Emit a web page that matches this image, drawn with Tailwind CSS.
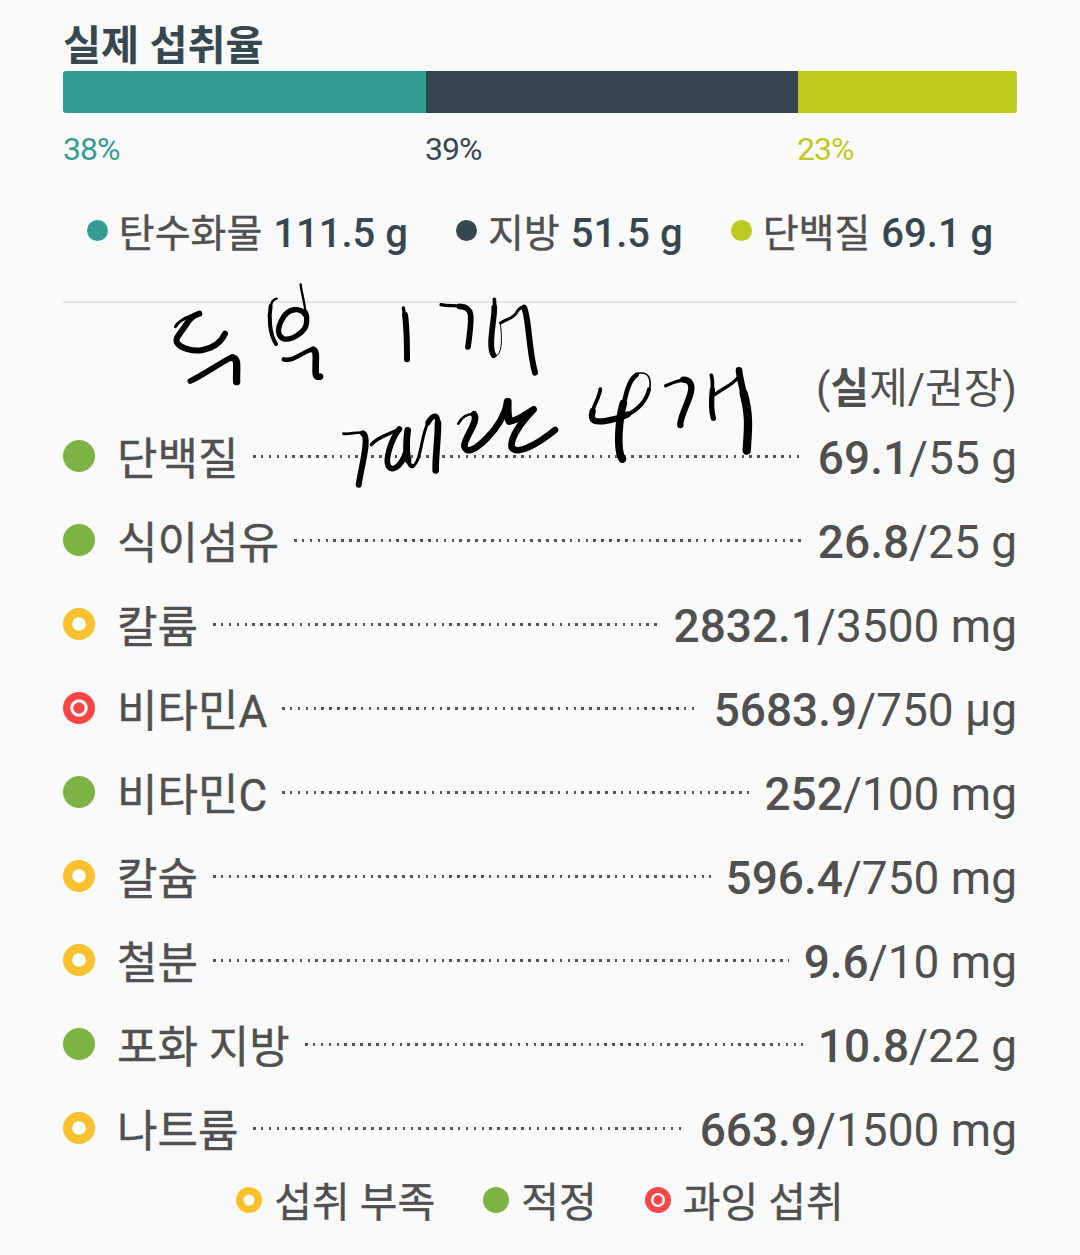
<!DOCTYPE html>
<html lang="ko">
<head>
  <meta charset="UTF-8">
  <meta name="viewport" content="width=device-width, initial-scale=1.0">
  <title>실제 섭취율</title>
  <script src="https://cdn.jsdelivr.net/npm/@tailwindcss/browser@4"></script>
</head>
<body class="relative h-[1255px] overflow-hidden bg-[#fafafa] px-[63px] font-['Roboto','Noto_Sans_CJK_KR',sans-serif] text-[#505050]">
  <svg class="hidden">
    <symbol id="good" viewBox="0 0 32 32"><circle cx="16" cy="16" r="16" fill="#7cb342"/></symbol>
    <symbol id="low" viewBox="0 0 32 32"><circle cx="16" cy="16" r="16" fill="#fbc02d"/><circle cx="16" cy="16" r="6.8" fill="#fff"/></symbol>
    <symbol id="over" viewBox="0 0 32 32"><circle cx="16" cy="16" r="16" fill="#f94545"/><circle cx="16" cy="16" r="7.2" fill="none" stroke="#fff" stroke-width="3"/></symbol>
  </svg>

  <header class="h-[71px] pt-[16px]">
    <h1 class="text-[41.4px] leading-[60px] font-bold text-[#37474f]">실제 섭취율</h1>
  </header>

  <section>
    <div class="flex h-[42px] overflow-hidden rounded-[3px]">
      <div class="w-[363px] bg-[#359c94]"></div>
      <div class="w-[372px] bg-[#37474f]"></div>
      <div class="flex-1 bg-[#bdca1f]"></div>
    </div>
    <div class="flex h-[72px] pt-[16px] text-[32px] leading-[40px] tracking-[-1px]">
      <div class="w-[362px] text-[#359c94]">38%</div>
      <div class="w-[372px] text-[#37474f]">39%</div>
      <div class="text-[#bdca1f]">23%</div>
    </div>
    <div class="flex h-[118px] items-start justify-center gap-[48px] border-b-2 border-[#e4e4e4] pt-[21px] text-[39px] leading-[56px]">
      <div class="flex items-center">
        <span class="mr-[11px] mb-[8px] size-[21px] rounded-full bg-[#359c94]"></span>
        <span class="[-webkit-text-stroke:0.4px]">탄수화물</span>
        <span class="ml-[11px] text-[40px] font-medium text-[#37474f]">111.5 g</span>
      </div>
      <div class="flex items-center">
        <span class="mr-[11px] mb-[8px] size-[21px] rounded-full bg-[#37474f]"></span>
        <span class="[-webkit-text-stroke:0.4px]">지방</span>
        <span class="ml-[11px] text-[40px] font-medium text-[#37474f]">51.5 g</span>
      </div>
      <div class="flex items-center">
        <span class="mr-[11px] mb-[8px] size-[21px] rounded-full bg-[#bdca1f]"></span>
        <span class="[-webkit-text-stroke:0.4px]">단백질</span>
        <span class="ml-[11px] text-[40px] font-medium text-[#37474f]">69.1 g</span>
      </div>
    </div>
  </section>

  <section class="text-[46px]">
    <div class="h-[111px] pt-[56px] text-right text-[42px] leading-[60px]">(<b class="font-bold">실</b>제/권장)</div>

    <div class="flex h-[84px] items-center">
      <svg class="size-8"><use href="#good"/></svg>
      <span class="ml-[22px] pt-[8px] text-[44px] [-webkit-text-stroke:0.4px]">단백질</span>
      <span class="mx-[15px] h-[3px] flex-1 bg-[repeating-linear-gradient(90deg,#555_0_2.6px,transparent_2.6px_7.88px)]"></span>
      <span class="pt-[5px]"><b class="font-medium">69.1</b>/55 g</span>
    </div>
    <div class="flex h-[84px] items-center">
      <svg class="size-8"><use href="#good"/></svg>
      <span class="ml-[22px] pt-[8px] text-[44px] [-webkit-text-stroke:0.4px]">식이섬유</span>
      <span class="mx-[15px] h-[3px] flex-1 bg-[repeating-linear-gradient(90deg,#555_0_2.6px,transparent_2.6px_7.88px)]"></span>
      <span class="pt-[5px]"><b class="font-medium">26.8</b>/25 g</span>
    </div>
    <div class="flex h-[84px] items-center">
      <svg class="size-8"><use href="#low"/></svg>
      <span class="ml-[22px] pt-[8px] text-[44px] [-webkit-text-stroke:0.4px]">칼륨</span>
      <span class="mx-[15px] h-[3px] flex-1 bg-[repeating-linear-gradient(90deg,#555_0_2.6px,transparent_2.6px_7.88px)]"></span>
      <span class="pt-[5px]"><b class="font-medium">2832.1</b>/3500 mg</span>
    </div>
    <div class="flex h-[84px] items-center">
      <svg class="size-8"><use href="#over"/></svg>
      <span class="ml-[22px] pt-[8px] text-[44px] [-webkit-text-stroke:0.4px]">비타민A</span>
      <span class="mx-[15px] h-[3px] flex-1 bg-[repeating-linear-gradient(90deg,#555_0_2.6px,transparent_2.6px_7.88px)]"></span>
      <span class="pt-[5px]"><b class="font-medium">5683.9</b>/750 μg</span>
    </div>
    <div class="flex h-[84px] items-center">
      <svg class="size-8"><use href="#good"/></svg>
      <span class="ml-[22px] pt-[8px] text-[44px] [-webkit-text-stroke:0.4px]">비타민C</span>
      <span class="mx-[15px] h-[3px] flex-1 bg-[repeating-linear-gradient(90deg,#555_0_2.6px,transparent_2.6px_7.88px)]"></span>
      <span class="pt-[5px]"><b class="font-medium">252</b>/100 mg</span>
    </div>
    <div class="flex h-[84px] items-center">
      <svg class="size-8"><use href="#low"/></svg>
      <span class="ml-[22px] pt-[8px] text-[44px] [-webkit-text-stroke:0.4px]">칼슘</span>
      <span class="mx-[15px] h-[3px] flex-1 bg-[repeating-linear-gradient(90deg,#555_0_2.6px,transparent_2.6px_7.88px)]"></span>
      <span class="pt-[5px]"><b class="font-medium">596.4</b>/750 mg</span>
    </div>
    <div class="flex h-[84px] items-center">
      <svg class="size-8"><use href="#low"/></svg>
      <span class="ml-[22px] pt-[8px] text-[44px] [-webkit-text-stroke:0.4px]">철분</span>
      <span class="mx-[15px] h-[3px] flex-1 bg-[repeating-linear-gradient(90deg,#555_0_2.6px,transparent_2.6px_7.88px)]"></span>
      <span class="pt-[5px]"><b class="font-medium">9.6</b>/10 mg</span>
    </div>
    <div class="flex h-[84px] items-center">
      <svg class="size-8"><use href="#good"/></svg>
      <span class="ml-[22px] pt-[8px] text-[44px] [-webkit-text-stroke:0.4px]">포화 지방</span>
      <span class="mx-[15px] h-[3px] flex-1 bg-[repeating-linear-gradient(90deg,#555_0_2.6px,transparent_2.6px_7.88px)]"></span>
      <span class="pt-[5px]"><b class="font-medium">10.8</b>/22 g</span>
    </div>
    <div class="flex h-[84px] items-center">
      <svg class="size-8"><use href="#low"/></svg>
      <span class="ml-[22px] pt-[8px] text-[44px] [-webkit-text-stroke:0.4px]">나트륨</span>
      <span class="mx-[15px] h-[3px] flex-1 bg-[repeating-linear-gradient(90deg,#555_0_2.6px,transparent_2.6px_7.88px)]"></span>
      <span class="pt-[5px]"><b class="font-medium">663.9</b>/1500 mg</span>
    </div>
  </section>

  <footer class="flex h-[60px] items-center justify-center gap-[48px] text-[41px] leading-[60px] [-webkit-text-stroke:0.4px]">
    <div class="flex items-center"><svg class="mr-[12px] size-[26px]"><use href="#low"/></svg><span class="pt-[6px]">섭취 부족</span></div>
    <div class="flex items-center"><svg class="mr-[12px] size-[26px]"><use href="#good"/></svg><span class="pt-[6px]">적정</span></div>
    <div class="flex items-center"><svg class="mr-[12px] size-[26px]"><use href="#over"/></svg><span class="pt-[6px]">과잉 섭취</span></div>
  </footer>

  <!-- handwritten pen memo over the list -->
  <svg class="absolute top-[280px] left-[160px] h-[220px] w-[620px]" viewBox="0 0 1860 660" fill="none" stroke="#000" stroke-linecap="round" stroke-linejoin="round">
    <g>
      <path stroke-width="9" d="M46 140C58 120 80 112 96 106"/>
      <path stroke-width="18" d="M118 101C92 108 84 126 70 146C54 168 46 176 50 186C60 205 100 216 128 210C160 203 184 185 195 161"/>
      <path stroke-width="17" d="M91 303C130 285 170 255 216 231"/>
      <path stroke-width="22" d="M220 234C236 238 228 270 230 305"/>
      <path stroke-width="7" d="M350 56C338 58 333 70 331 84"/>
      <path stroke-width="12" d="M332 78C326 110 328 160 348 192"/>
      <path stroke-width="16" d="M436 104C420 80 385 85 368 115C350 145 352 170 372 177C400 182 438 150 439 132C441 118 440 105 436 98"/>
      <path stroke-width="7" d="M422 13C424 40 434 60 437 104"/>
      <path stroke-width="13" d="M371 238C400 246 430 215 458 207"/>
      <path stroke-width="20" d="M460 209C472 215 466 240 467 265C466 285 468 292 480 290"/>
    </g>
    <g transform="translate(630 0)">
      <path stroke-width="10" d="M100 84L105 112"/>
      <path stroke-width="18" d="M105 104C110 140 111 190 111 238"/>
      <path stroke-width="10" d="M213 74C235 80 255 74 272 80"/>
      <path stroke-width="17" d="M268 79C312 80 306 110 294 201"/>
      <path stroke-width="11" d="M373 58C376 80 374 90 372 105"/>
      <path stroke-width="17" d="M373 82C374 120 352 200 371 226"/>
      <path stroke-width="3" d="M374 230C402 225 394 160 391 130"/>
      <path stroke-width="9" d="M392 129C410 116 430 118 442 94C450 82 458 80 464 81"/>
      <path stroke-width="18" d="M462 83C476 105 476 210 495 278"/>
    </g>
    <g transform="translate(510 300)">
      <path stroke-width="8" d="M40 161C60 164 80 155 100 158"/>
      <path stroke-width="18" d="M99 160C120 172 96 250 86 314"/>
      <path stroke-width="10" d="M124 194C145 168 180 164 208 146"/>
      <path stroke-width="17" d="M208 147C182 180 165 240 175 258C190 282 222 250 232 200"/>
      <path stroke-width="20" d="M233 151C229 180 228 215 234 240"/>
      <path stroke-width="13" d="M234 240C238 254 242 260 248 258"/>
      <path stroke-width="9" d="M248 259C275 245 272 165 296 124"/>
      <path stroke-width="16" d="M294 128C310 100 326 100 324 140"/>
      <path stroke-width="20" d="M324 130C324 180 316 230 317 271"/>
      <path stroke-width="8" d="M385 131C396 110 412 102 430 102"/>
      <path stroke-width="20" d="M432 103C448 122 402 175 403 198C410 225 440 205 470 175C500 145 525 105 533 64"/>
      <path stroke-width="24" d="M533 66C532 90 532 110 538 122"/>
      <path stroke-width="20" d="M538 124C560 125 590 100 611 88C580 120 540 170 545 202C560 226 620 195 675 150"/>
    </g>
    <g transform="translate(1230 210)">
      <path stroke-width="11" d="M91 117C88 145 70 165 66 192"/>
      <path stroke-width="19" d="M68 184C58 220 84 214 100 214C130 210 150 204 172 194"/>
      <path stroke-width="12" d="M168 196C205 180 230 150 237 118"/>
      <path stroke-width="5" d="M238 122C246 85 235 64 204 70"/>
      <path stroke-width="14" d="M200 74C172 92 164 150 156 190"/>
      <path stroke-width="23" d="M160 160C148 200 138 300 157 327"/>
      <path stroke-width="10" d="M287 107C310 96 325 92 345 88"/>
      <path stroke-width="19" d="M340 89C382 90 358 145 349 165C338 195 330 210 331 225"/>
      <path stroke-width="11" d="M424 76C430 92 427 115 426 140"/>
      <path stroke-width="16" d="M427 120C423 160 424 185 430 205"/>
      <path stroke-width="10" d="M434 134C460 114 485 106 503 84"/>
      <path stroke-width="20" d="M507 61C510 90 520 120 524 150"/>
      <path stroke-width="25" d="M521 130C540 200 534 240 530 302"/>
    </g>
  </svg>
</body>
</html>
